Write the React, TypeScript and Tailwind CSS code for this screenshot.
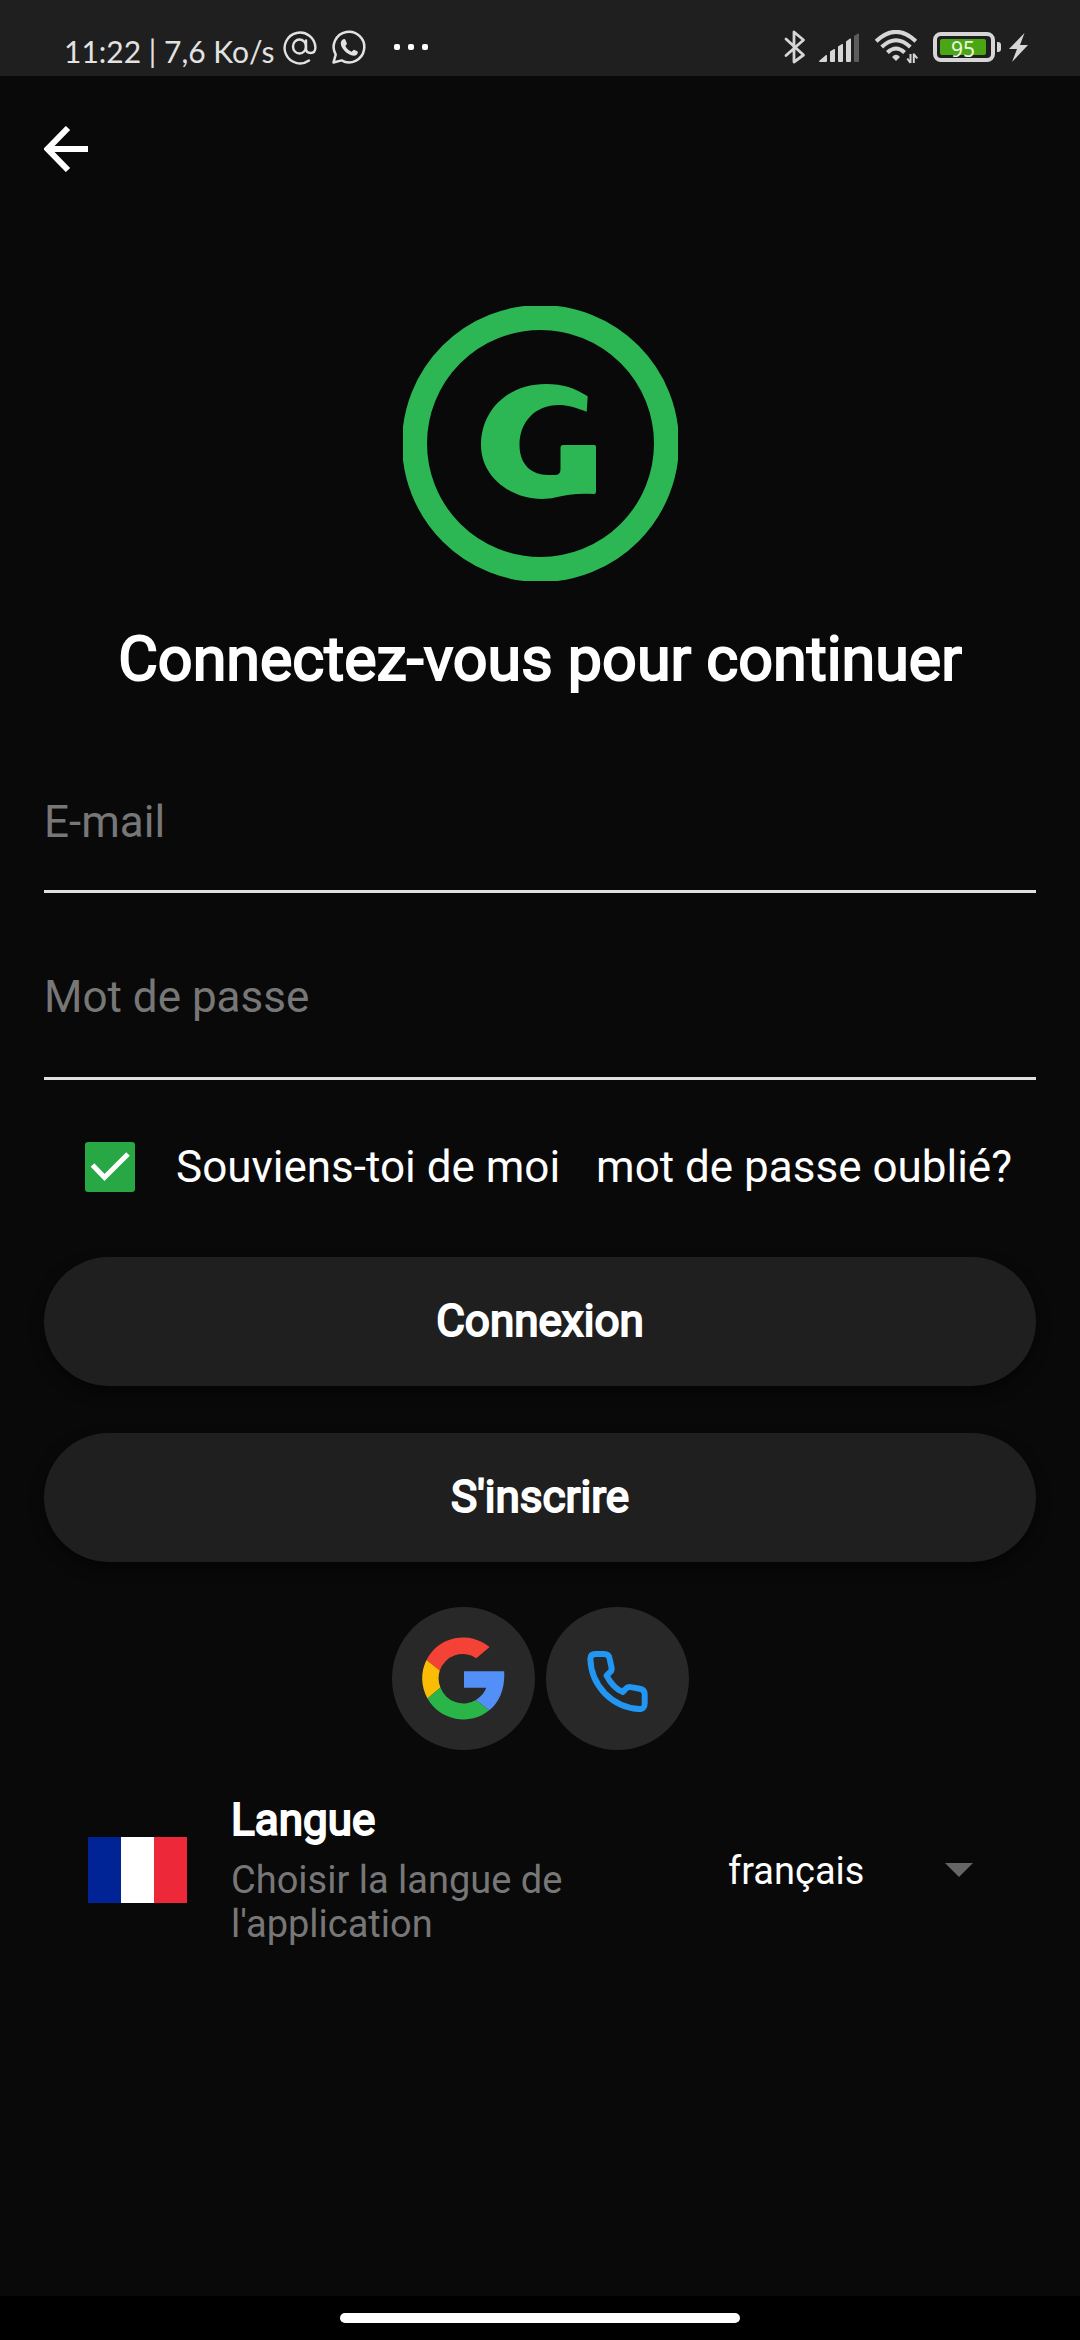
import { useState } from "react";

function StatusBar() {
  return (
    <header className="flex h-[76px] items-end justify-between bg-[#1f1f1f] pr-[52px] pl-16 font-['Lato','Liberation_Sans',sans-serif] text-[#e2e2e2]">
      <div className="flex h-[58px] items-center">
        <span className="mt-2 text-[30px] leading-10">11:22 | 7,6 Ko/s</span>
        <svg className="ml-2 size-9" viewBox="0 0 36 36" fill="none" stroke="currentColor" strokeWidth="2.4" strokeLinecap="round" aria-label="E-mail">
          <path d="M27 31.5A15.4 15.4 0 1 1 33.4 18.5C33.4 22.5 31.5 24 28.5 24S24 22 24 19.500V11.500" />
          <ellipse cx="17.500" cy="17.500" rx="6.500" ry="7" />
        </svg>
        <svg className="ml-[14px] size-[34px]" viewBox="0 0 34 34" aria-label="WhatsApp">
          <path d="M1.500 32.500L3.700 24.600A15.300 15.300 0 1 1 9.600 30.400Z" fill="none" stroke="currentColor" strokeWidth="2.500" strokeLinejoin="round" />
          <path d="M11.300 9.200C12.600 8.700 13.200 9.200 13.700 10.500L14.900 13.400C15.100 14.200 13.600 15.300 13.400 16C14.700 18.700 16.900 20.700 19.600 21.700C20.300 21.500 21.300 19.700 22 19.800L25.300 21.300C26.400 22 25.600 24 24.500 24.900C22 26.500 18.500 25.300 15.400 23.300C12.400 21.300 9 17.200 8.800 13.800C8.700 11.800 9.700 9.800 11.300 9.200Z" fill="currentColor" />
        </svg>
        <div className="ml-7 flex gap-2">
          <i className="size-[6px] rounded-xs bg-white" />
          <i className="size-[6px] rounded-xs bg-white" />
          <i className="size-[6px] rounded-xs bg-white" />
        </div>
      </div>
      <div className="flex h-[58px] items-center text-[#d6d6d6]">
        <svg className="h-[34px] w-[22px]" viewBox="0 0 22 34" fill="none" stroke="currentColor" strokeWidth="2.800" strokeLinejoin="round" strokeLinecap="round" aria-label="Bluetooth">
          <path d="M2 9L19.500 25L10 32V2L19.500 10L2 25.500" />
        </svg>
        <svg className="ml-[13px] h-[29px] w-10" viewBox="0 0 40 29" fill="currentColor" aria-label="Signal">
          <path d="M0 28L7 22Q8 21.500 8 23V28Q8 29 7 29H1Q0 29 0 28Z" />
          <path d="M11 18.500L15 16Q16 15.500 16 17V28Q16 29 15 29H12Q11 29 11 28Z" />
          <path d="M19 13.500L23 11Q24 10.500 24 12V28Q24 29 23 29H20Q19 29 19 28Z" />
          <path d="M27 8.500L31 5.500Q32 5 32 6.500V28Q32 29 31 29H28Q27 29 27 28Z" />
          <path d="M35 3L39 .5Q40 0 40 1.500V28Q40 29 39 29H36Q35 29 35 28Z" fill="#5c5c5c" />
        </svg>
        <svg className="ml-4 h-[34px] w-[43px]" viewBox="0 0 43 34" aria-label="Wi-Fi">
          <g fill="none" stroke="currentColor" strokeWidth="4">
            <path d="M1.200 11.200Q21 -7.500 40.800 11.200" />
            <path d="M6.700 17Q21 3.500 35.300 17" />
            <path d="M12.400 22.500Q21 14.500 29.600 22.500" />
          </g>
          <path d="M17 27Q21 22.500 25 27L21 31Z" fill="currentColor" />
          <path d="M35.500 24V33M35.500 33L32.300 28.500M38.800 33V23.500M38.800 24L42.300 28.500" fill="none" stroke="currentColor" strokeWidth="2" />
        </svg>
        <div className="ml-[15px] flex items-center">
          <div className="flex h-[30px] w-[62px] rounded-[8px] border-4 border-current p-[3px]">
            <span className="flex w-[46px] items-center justify-center rounded-xs bg-[#4ba614] pt-1 font-['Noto_Sans',sans-serif] text-[21px] leading-4 text-[#e8f6df]">95</span>
          </div>
          <i className="ml-[2px] h-[10px] w-1 rounded-r-[3px] bg-current" />
        </div>
        <svg className="ml-2 h-[29px] w-[19px]" viewBox="0 0 19 29" fill="currentColor" aria-label="En charge">
          <path d="M15.500 0L0 16H8L3 29L19 12H11Z" />
        </svg>
      </div>
    </header>
  );
}

function Logo() {
  return (
    <svg className="mx-auto mt-[84px] block size-[275px]" viewBox="0 0 275 275" role="img" aria-label="Logo">
      <circle cx="137.500" cy="137.500" r="126" fill="none" stroke="#2db654" strokeWidth="25" />
      <path
        fill="#2db654"
        d="M184.700 90.300L183.700 105.700C173 101.500 164 99 156 99C132 99 116.500 116 116.500 139C116.500 158 128 169 145 169H152Q157.500 169 157.500 163V142Q157.500 139 160 139H191.500Q193 139 193 141V186Q193 188 191 188C176 187 164 188.500 152 191.500C142 194 130 193 121 190.500C95 183 78 163 78 139C78 105 104 78 143 78C160 78 172 82 184.700 90.300Z"
      />
    </svg>
  );
}

function GoogleIcon() {
  return (
    <svg className="size-[83px]" viewBox="156 140 247 250" aria-hidden="true">
      <path fill="#f44336" d="M168 209A124 124 0 0 1 358 170L318 204A73 73 0 0 0 208 241Z" />
      <path fill="#fbbc05" d="M168 209L208 241A75 75 0 0 0 210 292L171 325A124 124 0 0 1 168 209Z" />
      <path fill="#2ab548" d="M171 325L210 292A74 74 0 0 0 317 330L357 361A124 124 0 0 1 171 325Z" />
      <path fill="#5290f8" d="M281 243H402C405 292 390 334 357 361L317 330Q341 314 348 293H281Z" />
    </svg>
  );
}

function PhoneIcon() {
  return (
    <svg className="mt-[5px] h-[61px] w-[61px]" viewBox="650 182 182 184" fill="none" stroke="#2196f3" strokeWidth="18" strokeLinejoin="round" aria-hidden="true">
      <path d="M659 206Q659 191 675 191H700Q715 191 717 204L723 232Q725 239 720 244L708 256C720 279 735 296 757 306L766 296Q772 289 781 291L808 296Q823 299 823 312V340Q823 359 805 357C724 350 662 288 659 206Z" />
    </svg>
  );
}

export default function App() {
  const [remember, setRemember] = useState(true);

  return (
    <div className="flex min-h-screen flex-col bg-[#090909] font-['Roboto',sans-serif] text-[44px] leading-[52px] text-white">
      <StatusBar />
      <main className="flex flex-1 flex-col px-11">
        <div className="flex h-[146px] items-center">
          <button type="button" aria-label="Retour">
            <svg className="h-[46px] w-11" viewBox="0 0 44 46" fill="none" stroke="currentColor" strokeWidth="6" aria-hidden="true">
              <path d="M44 23H5M24 2L3.500 23L24 44" />
            </svg>
          </button>
        </div>

        <Logo />
        <h1 className="mt-[42px] text-center text-[61px] leading-[72px] [-webkit-text-stroke:2px_white]">Connectez-vous pour continuer</h1>

        <form className="flex flex-col" onSubmit={(e) => e.preventDefault()}>
          <input
            type="email"
            aria-label="E-mail"
            placeholder="E-mail"
            className="mt-[101px] h-[97px] w-full border-b-3 border-[#dfe0df] bg-transparent pb-[42px] outline-none placeholder:text-[#777777]"
          />
          <input
            type="password"
            aria-label="Mot de passe"
            placeholder="Mot de passe"
            className="mt-[78px] h-[109px] w-full border-b-3 border-[#dfe0df] bg-transparent pb-[54px] outline-none placeholder:text-[#777777]"
          />

          <div className="mt-[61px] flex items-center justify-between pr-6 pl-[41px]">
            <label className="flex items-center gap-[41px]">
              <span className="relative flex size-[50px]">
                <input
                  type="checkbox"
                  checked={remember}
                  onChange={(e) => setRemember(e.target.checked)}
                  className="size-[50px] appearance-none rounded-[3px] border-4 border-[#28a745] checked:bg-[#28a745]"
                />
                {remember && (
                  <svg className="pointer-events-none absolute inset-0" viewBox="0 0 50 50" fill="none" stroke="white" strokeWidth="5" aria-hidden="true">
                    <path d="M7.500 23L19.500 35.500L43 12" />
                  </svg>
                )}
              </span>
              Souviens-toi de moi
            </label>
            <a href="#oubli">mot de passe oublié?</a>
          </div>

          <button type="submit" className="mt-16 h-[129px] rounded-full bg-[#1f1f1f] pb-[2px] shadow-[0_6px_14px_rgba(0,0,0,0.5)] [-webkit-text-stroke:2px_white]">
            Connexion
          </button>
          <button type="button" className="mt-[47px] h-[129px] rounded-full bg-[#1f1f1f] pb-[2px] shadow-[0_6px_14px_rgba(0,0,0,0.5)] [-webkit-text-stroke:2px_white]">
            S'inscrire
          </button>
        </form>

        <div className="mt-[45px] flex justify-center gap-[11px]">
          <button type="button" aria-label="Google" className="flex size-[143px] items-center justify-center rounded-full bg-[#282828]">
            <GoogleIcon />
          </button>
          <button type="button" aria-label="Téléphone" className="flex size-[143px] items-center justify-center rounded-full bg-[#282828]">
            <PhoneIcon />
          </button>
        </div>

        <section className="mt-11 flex items-center px-11">
          <div className="flex h-[66px] w-[99px] shrink-0" role="img" aria-label="Drapeau français">
            <i className="flex-1 bg-[#002395]" />
            <i className="flex-1 bg-white" />
            <i className="flex-1 bg-[#ed2939]" />
          </div>
          <div className="ml-11 flex-1">
            <label htmlFor="langue" className="block [-webkit-text-stroke:2px_white]">Langue</label>
            <p className="mt-3 text-[38px] leading-11 text-[#777777]">Choisir la langue de l'application</p>
          </div>
          <div className="relative flex w-[264px] shrink-0 items-center">
            <select id="langue" defaultValue="fr" className="w-full appearance-none bg-transparent pt-[2px] text-[38px] outline-none">
              <option value="fr">français</option>
              <option value="en">English</option>
            </select>
            <svg className="pointer-events-none absolute right-[19px] h-[14px] w-7" viewBox="0 0 28 14" aria-hidden="true">
              <path d="M0 0H28L14 14Z" fill="#666666" />
            </svg>
          </div>
        </section>
      </main>
      <footer className="flex h-11 items-center justify-center bg-black">
        <i className="h-[10px] w-[37%] rounded-full bg-white" />
      </footer>
    </div>
  );
}
